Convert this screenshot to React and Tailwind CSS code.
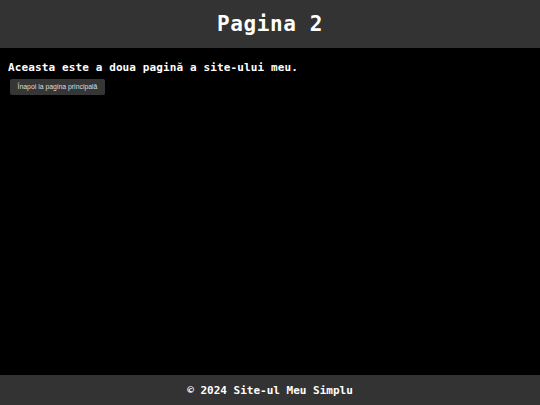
export default function App() {
  const mono = { fontFamily: '"DejaVu Sans Mono", "Liberation Mono", monospace' };
  return (
    <div className="flex h-[405px] w-full flex-col bg-black text-white">
      <header className="flex h-[48px] shrink-0 items-center justify-center bg-[#333333]">
        <h1 className="text-[21px] font-bold leading-none tracking-[0.6px]" style={mono}>Pagina 2</h1>
      </header>
      <main className="flex-1 px-[8px] pt-[13px]">
        <p className="text-[11px] font-bold leading-[14px] tracking-[0.12px]" style={mono}>Aceasta este a doua pagină a site-ului meu.</p>
        <button className="ml-[2px] mt-[4px] flex h-[16px] w-[95px] items-center justify-center rounded-[2px] bg-[#363636] text-[#dddddd]" style={{ fontFamily: '"Liberation Sans", Arial, sans-serif' }}>
          <span className="inline-block scale-x-[0.86] whitespace-nowrap text-[8px] leading-none">Înapoi la pagina principală</span>
        </button>
      </main>
      <footer className="flex h-[30px] shrink-0 items-center justify-center bg-[#333333]">
        <p className="text-[11px] font-bold leading-none" style={mono}>© 2024 Site-ul Meu Simplu</p>
      </footer>
    </div>
  );
}
